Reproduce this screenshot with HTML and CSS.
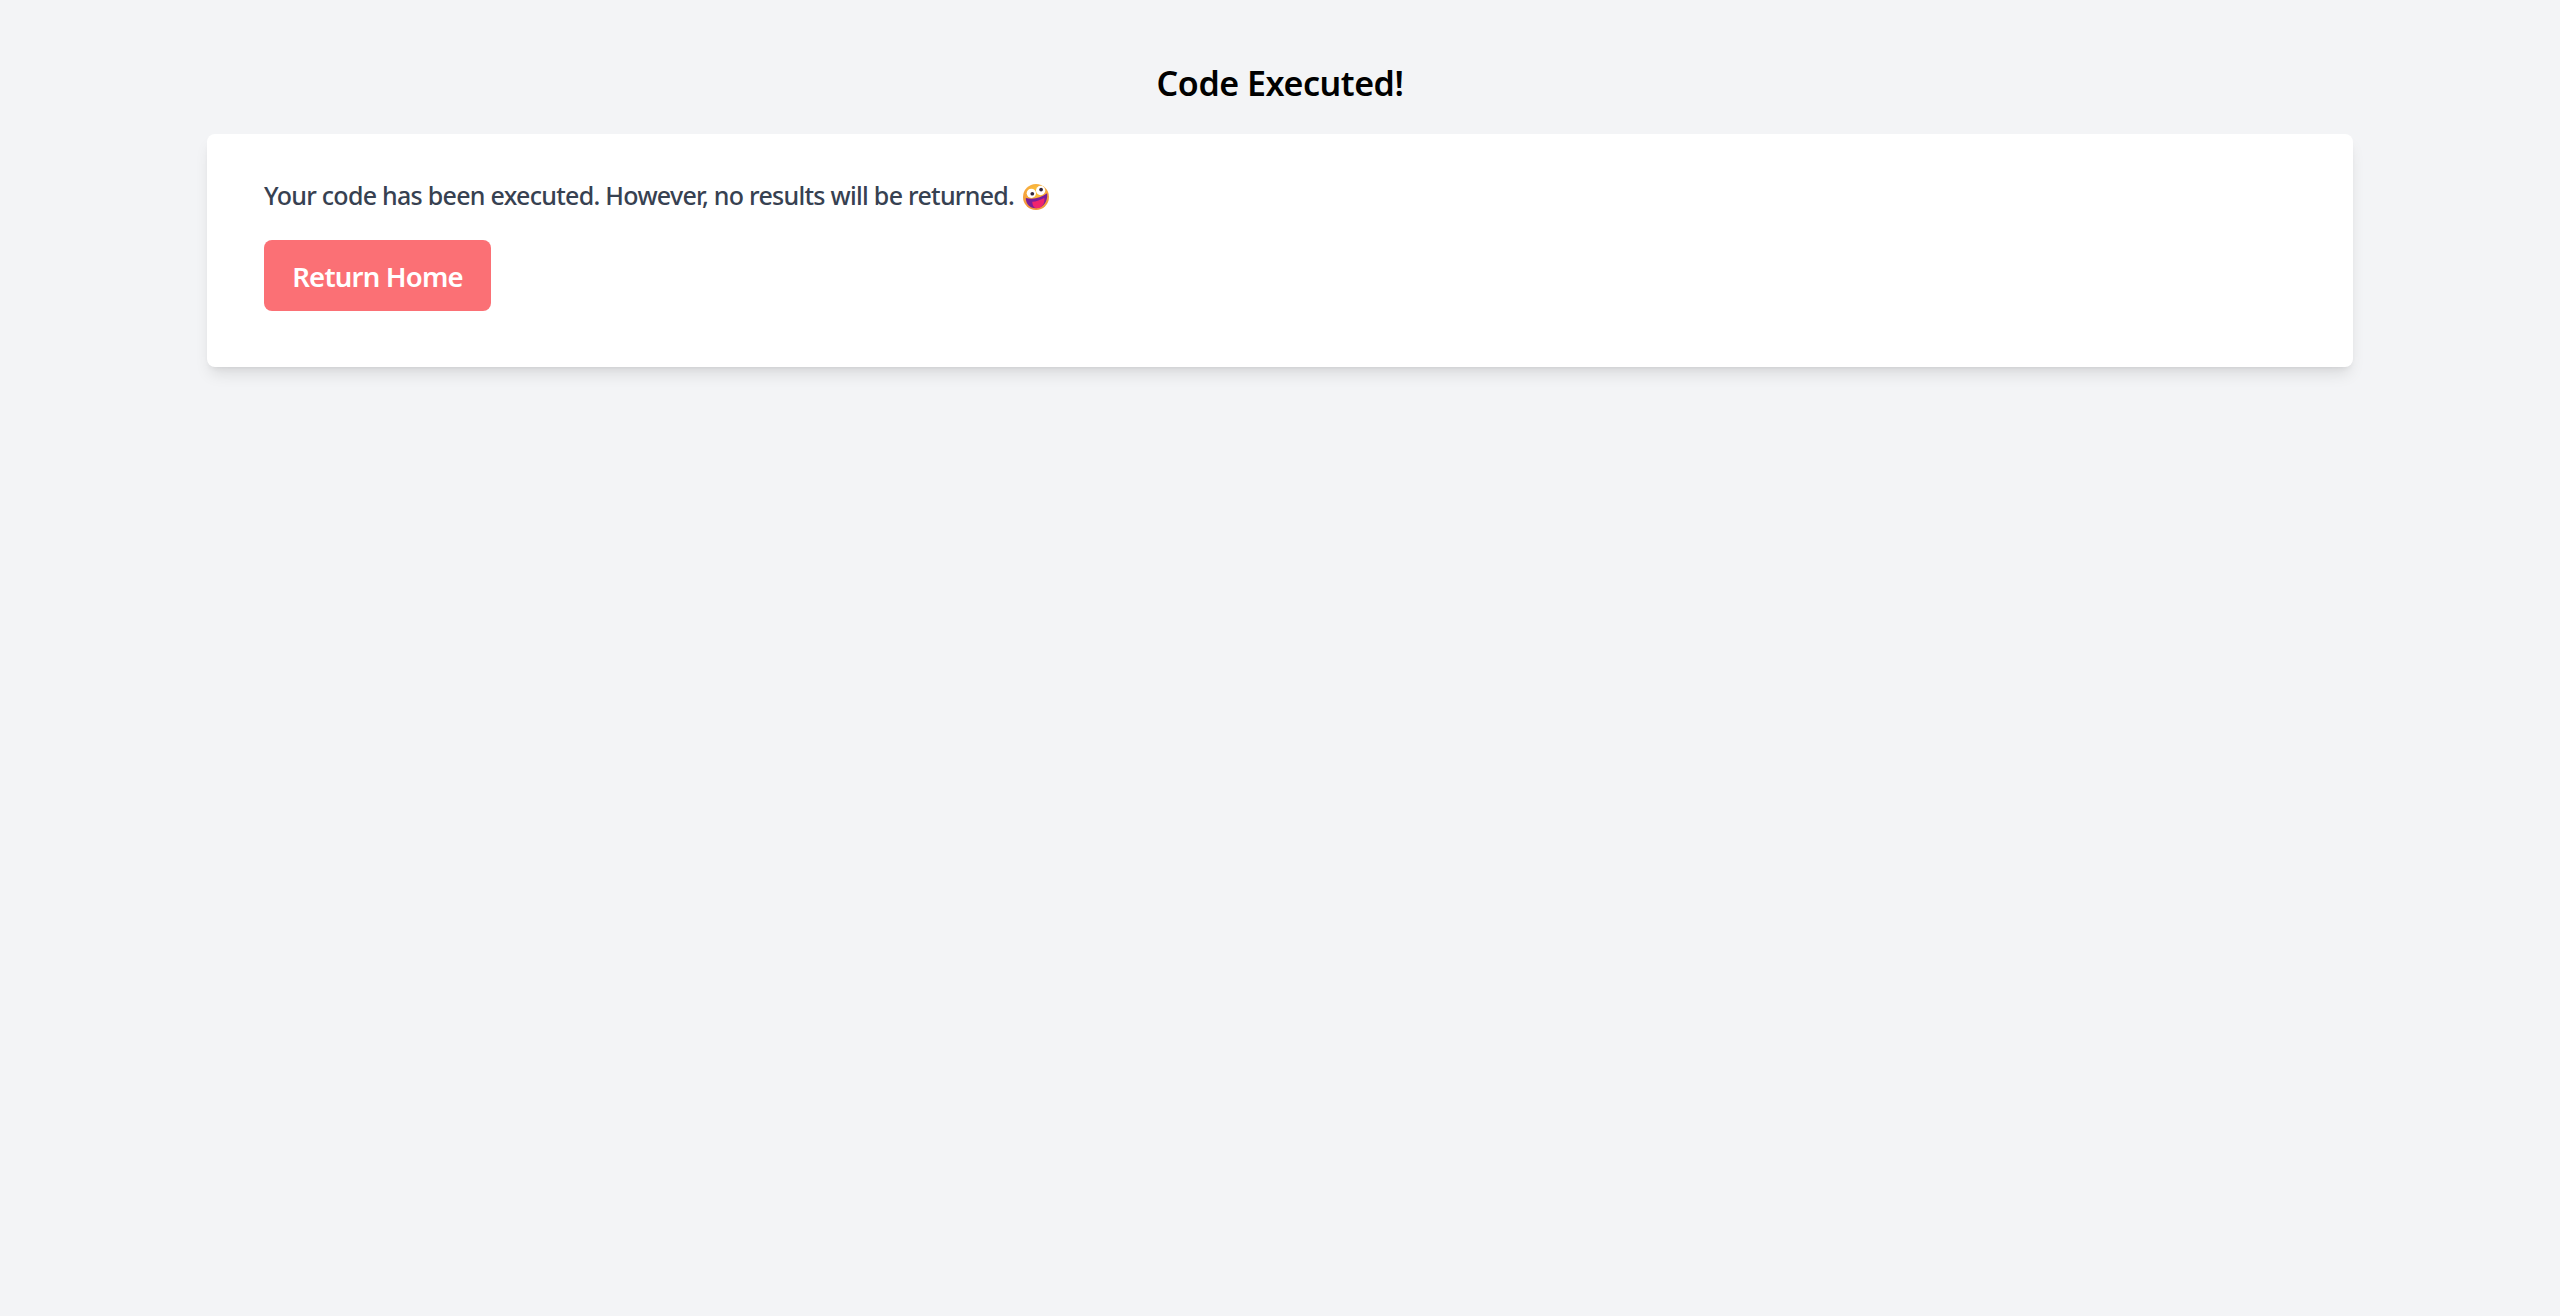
FILE: index.html
```html
<!DOCTYPE html>
<html lang="en">
<head>
<meta charset="utf-8">
<title>Code Executed!</title>
<link rel="stylesheet" href="styles.css">
</head>
<body>
<main class="wrap">
  <h1 class="title">Code Executed!</h1>
  <section class="card">
    <p class="msg"><span>Your code has been executed. However, no results will be returned.</span>
      <svg class="emoji" viewBox="0 0 28 28" aria-hidden="true">
        <defs>
          <radialGradient id="face" cx="0.5" cy="0.3" r="0.8">
            <stop offset="0" stop-color="#fcc63c"/>
            <stop offset="1" stop-color="#f08a3c"/>
          </radialGradient>
        </defs>
        <circle cx="14" cy="14" r="14" fill="url(#face)"/>
        <path d="M3 15c8 2 16 0 23-5 1 9-4 16-12 16C7 26 3 21 3 15z" fill="#7a1f9a"/>
        <path d="M10 19c4 0 9-2 13-4 1 6-3 11-8 11-3 0-5-3-5-7z" fill="#f0246e"/>
        <circle cx="9" cy="10" r="5" fill="#fff"/>
        <circle cx="19" cy="7" r="5" fill="#fff"/>
        <circle cx="10" cy="10.500" r="2" fill="#33263a"/>
        <circle cx="19.500" cy="6" r="2" fill="#33263a"/>
      </svg>
    </p>
    <a class="btn" href="#">Return Home</a>
  </section>
</main>
</body>
</html>
```
FILE: styles.css
```css
html, body { margin: 0; padding: 0; }
body {
  min-height: 1316px;
  background: #f3f4f6;
  font-family: "Noto Sans", "Open Sans", sans-serif;
}
.wrap {
  width: 2146px;
  margin: 0 auto;
  padding-top: 63px;
}
.title {
  margin: 0 0 31px;
  text-align: center;
  font-size: 34px;
  line-height: 40px;
  font-weight: 600;
  letter-spacing: -0.45px;
  color: #000;
}
.card {
  background: #fff;
  border-radius: 8px;
  padding: 40px 57px 56px;
  box-shadow: 0 10px 15px -3px rgba(0,0,0,.1), 0 4px 6px -4px rgba(0,0,0,.1);
}
.msg {
  margin: 0 0 23px;
  font-size: 25px;
  line-height: 43px;
  font-weight: 500;
  letter-spacing: -0.72px;
  color: #374151;
}
.emoji { width: 26px; height: 26px; margin-left: 3px; vertical-align: -5px; }
.btn {
  display: inline-block;
  width: 227px;
  box-sizing: border-box;
  text-align: center;
  padding: 15px 0 13px;
  font-size: 27.5px;
  line-height: 43px;
  font-weight: 600;
  letter-spacing: -0.8px;
  color: #fff;
  background: #fb7075;
  border-radius: 8px;
  text-decoration: none;
}
```
